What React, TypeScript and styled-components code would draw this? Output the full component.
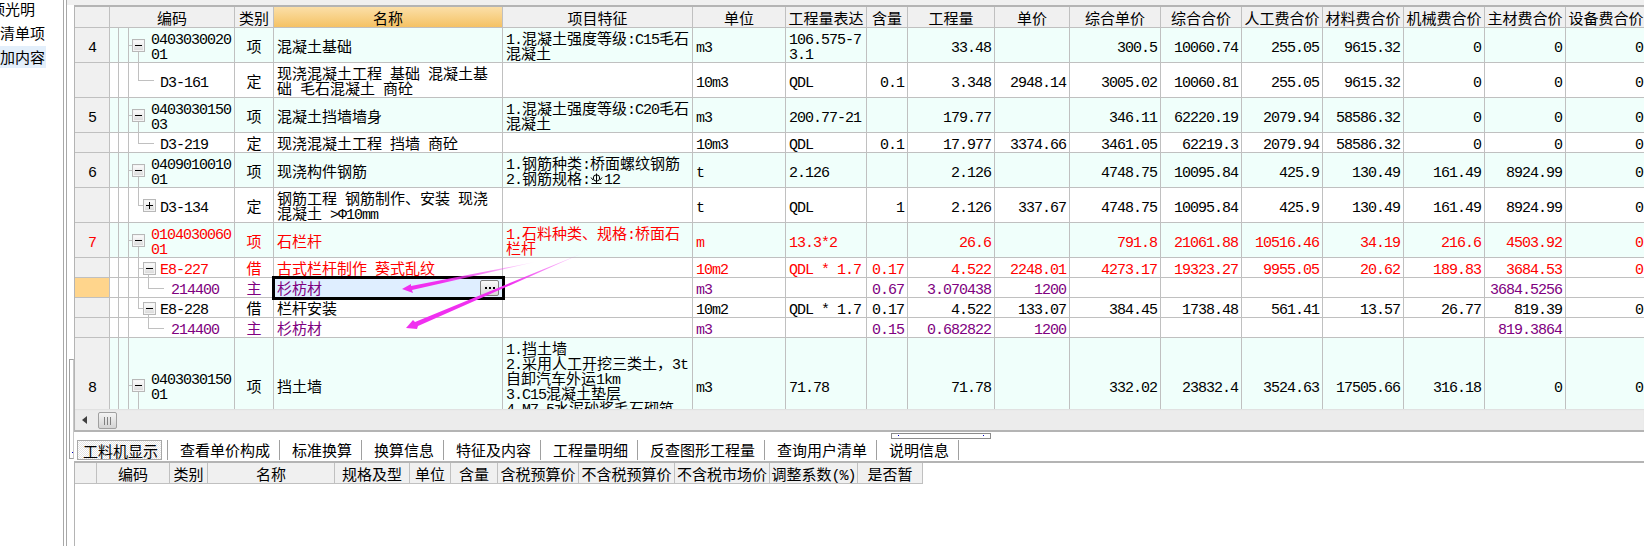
import React from 'react';
import styled, { createGlobalStyle } from 'styled-components';

const GlobalStyle = createGlobalStyle`
  html, body {
    margin: 0;
    padding: 0;
    background: #ffffff;
  }
  body {
    font-family: "Noto Sans CJK SC", "Liberation Sans", sans-serif;
    font-size: 15px;
    color: #000000;
  }
`;

const GRID_LINE = '#c0c0c0';
const FRAME_LINE = '#b4b4b4';

// Page shell
const Page = styled.div`
  position: relative;
  display: flex;
  width: 1644px;
  height: 546px;
  overflow: hidden;
`;

const Sidebar = styled.div`
  width: 63px;
  flex: none;
  display: flex;
  flex-direction: column;
  gap: 2px;
  margin-top: -2px;
  overflow: hidden;
`;

const SideItem = styled.div<{ $active?: boolean; $shift?: number }>`
  width: 46px;
  height: 22px;
  line-height: 22px;
  white-space: nowrap;
  text-indent: ${(p) => p.$shift || 0}px;
  background: ${(p) => (p.$active ? '#e3effb' : 'transparent')};
`;

const Splitter = styled.div`
  width: 2px;
  flex: none;
  border-left: 1px solid #a8a8a8;
  border-right: 1px solid #a8a8a8;
`;

const Main = styled.div`
  flex: 1;
  min-width: 0;
  display: flex;
  flex-direction: column;
`;

const TopStrip = styled.div`
  height: 5px;
  flex: none;
  background: #f0f0f0;
`;

const GridFrame = styled.div`
  height: 423px;
  flex: none;
  margin-left: 7px;
  display: flex;
  flex-direction: column;
  border: solid ${FRAME_LINE};
  border-width: 2px 0 2px 1px;
`;

const ScrollArea = styled.div`
  flex: 1;
  min-height: 0;
  overflow: hidden;
`;

// Tables
const GridTable = styled.table<{ $width: number }>`
  width: ${(p) => p.$width}px;
  table-layout: fixed;
  border-collapse: separate;
  border-spacing: 0;
  line-height: 15px;
`;

const HeadCell = styled.th<{ $current?: boolean }>`
  height: 20px;
  padding: 0;
  box-sizing: content-box;
  font-weight: 400;
  font-size: 15px;
  text-align: center;
  white-space: nowrap;
  overflow: hidden;
  background: ${(p) =>
    p.$current ? 'linear-gradient(#fbdfa8, #f5c264)' : '#f0f0f0'};
  border-right: 1px solid ${GRID_LINE};
  border-bottom: 1px solid ${GRID_LINE};
`;

const toneColor = { plain: '#000000', red: '#ff0000', purple: '#800080' };
type Tone = keyof typeof toneColor;

const Cell = styled.td<{
  $mint?: boolean;
  $tone?: Tone;
  $align?: string;
  $valign?: string;
}>`
  position: relative;
  padding: ${(p) => (p.$valign === 'top' ? '2px' : '0')} 3px 0 3px;
  overflow: hidden;
  white-space: pre;
  vertical-align: ${(p) => p.$valign || 'middle'};
  text-align: ${(p) => p.$align || 'left'};
  color: ${(p) => toneColor[p.$tone || 'plain']};
  background: ${(p) => (p.$mint ? '#f0fffb' : '#ffffff')};
  border-right: 1px solid ${GRID_LINE};
  border-bottom: 1px solid ${GRID_LINE};
`;

const RowNoCell = styled(Cell)<{ $picked?: boolean }>`
  text-align: center;
  background: ${(p) => (p.$picked ? '#ffd58c' : '#f0f0f0')};
`;

const GapCell = styled(Cell)`
  padding: 0;
`;

const SelectedCell = styled(Cell)`
  overflow: visible;
  background: #dfeeff;
  outline: 3px solid #000000;
  outline-offset: -1px;
  z-index: 1;
`;

const EllipsisButton = styled.div`
  position: absolute;
  top: 2px;
  right: 3px;
  width: 17px;
  height: 14px;
  border: 1px solid #808080;
  border-radius: 2px;
  background: linear-gradient(#fafafa, #d8d8d8);
  display: flex;
  align-items: center;
  justify-content: center;
  gap: 2px;
`;

const EllipsisDot = styled.i`
  width: 2px;
  height: 2px;
  background: #000000;
`;

const Latin = styled.span`
  font-family: "Liberation Mono", monospace;
  font-size: 15px;
  line-height: 0;
  letter-spacing: -1px;
`;

// Tree column
const TreeCell = styled(Cell)<{ $indent: number }>`
  padding-left: ${(p) => p.$indent}px;
  padding-right: 0;
`;

const VLine = styled.i<{ $x: number; $span: 'up' | 'down' | 'full' }>`
  position: absolute;
  left: ${(p) => p.$x}px;
  width: 1px;
  top: ${(p) => (p.$span === 'down' ? '50%' : '0')};
  bottom: ${(p) => (p.$span === 'up' ? '50%' : '0')};
  background: ${GRID_LINE};
`;

const HLine = styled.i<{ $x: number; $w: number }>`
  position: absolute;
  top: 50%;
  left: ${(p) => p.$x}px;
  width: ${(p) => p.$w}px;
  height: 1px;
  background: ${GRID_LINE};
`;

const Toggle = styled.span<{ $x: number }>`
  position: absolute;
  top: calc(50% - 6px);
  left: ${(p) => p.$x}px;
  width: 11px;
  height: 11px;
  border: 1px solid #b8b8b8;
  box-shadow: inset 0 0 0 1px #f4f4f4;
  background: linear-gradient(#ffffff, #d8d8d8);
  display: flex;
  align-items: center;
  justify-content: center;
`;

const ToggleBar = styled.i<{ $upright?: boolean }>`
  position: absolute;
  background: #000000;
  width: ${(p) => (p.$upright ? '1px' : '7px')};
  height: ${(p) => (p.$upright ? '7px' : '1px')};
  left: ${(p) => (p.$upright ? '5px' : '2px')};
  top: ${(p) => (p.$upright ? '2px' : '5px')};
`;

// Scrollbar
const ScrollBar = styled.div`
  height: 21px;
  flex: none;
  display: flex;
  align-items: center;
  background: #ececec;
  box-shadow: inset 0 1px 1px #e0e0e0;
`;

const ScrollLeft = styled.i`
  width: 0;
  height: 0;
  margin-left: 7px;
  border: solid transparent;
  border-width: 4px 5px 4px 0;
  border-right-color: #404040;
`;

const ScrollThumb = styled.div`
  width: 17px;
  height: 15px;
  margin: 2px 0 0 11px;
  border: 1px solid #a0a0a0;
  border-radius: 2px;
  background: linear-gradient(#f4f4f4, #d4d4d4);
  display: flex;
  align-items: center;
  justify-content: center;
  gap: 2px;
`;

const ScrollGrip = styled.i`
  width: 1px;
  height: 8px;
  background: #808080;
`;

// Tabs and lower pane
const HandleRow = styled.div`
  height: 8px;
  flex: none;
  display: flex;
  align-items: center;
`;

const HandleBar = styled.div`
  position: relative;
  width: 98px;
  height: 4px;
  margin-left: 824px;
  border: 1px solid #8c8c8c;
`;

const HandleDot = styled.i<{ $x: number }>`
  position: absolute;
  top: 1px;
  left: ${(p) => p.$x}px;
  width: 1px;
  height: 1px;
  background: #0000c0;
`;

const TabBar = styled.div`
  height: 21px;
  flex: none;
  margin-left: 10px;
  display: flex;
`;

const TabSlot = styled.div<{ $active?: boolean }>`
  height: 20px;
  flex: none;
  padding: ${(p) => (p.$active ? '0 5px 0 0' : '0 9px 0 12px')};
  border-right: 1px solid #a0a0a0;
  line-height: 20px;
  white-space: nowrap;
`;

const ActiveLabel = styled.div`
  width: 78px;
  height: 18px;
  padding-left: 5px;
  line-height: 20px;
  border: 1px solid #a8a8a8;
  background: repeating-conic-gradient(#e4e4e4 0% 25%, #ffffff 0% 50%) 0 0 / 2px 2px;
`;

const LowerPane = styled.div`
  flex: 1;
  min-height: 0;
  margin-left: 7px;
  border-top: 2px solid ${FRAME_LINE};
  border-left: 1px solid ${FRAME_LINE};
`;

// Things that lie over the page
const GutterHandle = styled.div`
  position: absolute;
  left: 69px;
  top: 359px;
  width: 3px;
  height: 98px;
  border: 1px solid #a0a0a0;
  border-right-color: #c8c8c8;
`;

const GutterDot = styled.i`
  position: absolute;
  left: 2px;
  top: 92px;
  width: 1px;
  height: 1px;
  background: #0000c0;
`;

const Annotation = styled.svg`
  position: absolute;
  left: 0;
  top: 0;
  pointer-events: none;
  z-index: 5;
`;

const RebarIcon = styled.svg`
  display: inline-block;
  vertical-align: -1px;
  margin-right: 1px;
`;

const RebarMark = () => (
  <RebarIcon width="13" height="12" viewBox="0 0 13 12" fill="none" stroke="#000" strokeWidth="1">
    <circle cx="6.5" cy="5" r="3.2" />
    <path d="M6.5 0.5V10.5M1.5 10.5H11.5M1 4.5L3 7M12 4.5L10 7" />
  </RebarIcon>
);

// split a string into latin and CJK runs, SimSun-like half width for latin
const Mixed = ({ text }: { text: string }) => {
  const parts = text.split(/([\x21-\x7e Φ]+|⌀)/).filter(Boolean);
  return (
    <>
      {parts.map((part, i) => {
        if (part === '⌀') return <RebarMark key={i} />;
        if (/^[\x21-\x7e Φ]+$/.test(part)) return <Latin key={i}>{part}</Latin>;
        return <React.Fragment key={i}>{part}</React.Fragment>;
      })}
    </>
  );
};

interface TreeSpec {
  level: 0 | 1 | 2;
  toggle?: '+' | '-';
  trunk?: 'up' | 'down' | 'full';
  branch?: 'up' | 'down';
}

interface RowData {
  no?: string;
  picked?: boolean;
  height: number;
  mint?: boolean;
  tone?: Tone;
  tree: TreeSpec;
  code: string;
  kind: string;
  name: string;
  selected?: boolean;
  feature?: string;
  featureTop?: boolean;
  unit: string;
  expr?: string;
  values: string[];
}

const upperColumns = [35, 9, 10, 106, 39, 229, 190, 93, 81, 41, 87, 75, 91, 81, 81, 81, 81, 81, 81];
const lowerColumns = [22, 73, 38, 127, 75, 41, 47, 81, 96, 95, 88, 65];
const upperHeads = ['单位', '工程量表达', '含量', '工程量', '单价', '综合单价', '综合合价', '人工费合价', '材料费合价', '机械费合价', '主材费合价', '设备费合价'];
const lowerHeads = ['', '编码', '类别', '名称', '规格及型', '单位', '含量', '含税预算价', '不含税预算价', '不含税市场价', '调整系数(%)', '是否暂'];

const rows: RowData[] = [
  {
    no: '4', height: 34, mint: true, tree: { level: 0, toggle: '-', trunk: 'down' },
    code: '0403030020\n01', kind: '项', name: '混凝土基础',
    feature: '1.混凝土强度等级:C15毛石\n混凝土', unit: 'm3', expr: '106.575-7\n3.1',
    values: ['', '33.48', '', '300.5', '10060.74', '255.05', '9615.32', '0', '0', '0'],
  },
  {
    height: 34, tree: { level: 1, trunk: 'up' },
    code: 'D3-161', kind: '定', name: '现浇混凝土工程 基础 混凝土基\n础 毛石混凝土 商砼',
    unit: '10m3', expr: 'QDL',
    values: ['0.1', '3.348', '2948.14', '3005.02', '10060.81', '255.05', '9615.32', '0', '0', '0'],
  },
  {
    no: '5', height: 34, mint: true, tree: { level: 0, toggle: '-', trunk: 'down' },
    code: '0403030150\n03', kind: '项', name: '混凝土挡墙墙身',
    feature: '1.混凝土强度等级:C20毛石\n混凝土', unit: 'm3', expr: '200.77-21',
    values: ['', '179.77', '', '346.11', '62220.19', '2079.94', '58586.32', '0', '0', '0'],
  },
  {
    height: 19, tree: { level: 1, trunk: 'up' },
    code: 'D3-219', kind: '定', name: '现浇混凝土工程 挡墙 商砼',
    unit: '10m3', expr: 'QDL',
    values: ['0.1', '17.977', '3374.66', '3461.05', '62219.3', '2079.94', '58586.32', '0', '0', '0'],
  },
  {
    no: '6', height: 34, mint: true, tree: { level: 0, toggle: '-', trunk: 'down' },
    code: '0409010010\n01', kind: '项', name: '现浇构件钢筋',
    feature: '1.钢筋种类:桥面螺纹钢筋\n2.钢筋规格:⌀12', unit: 't', expr: '2.126',
    values: ['', '2.126', '', '4748.75', '10095.84', '425.9', '130.49', '161.49', '8924.99', '0'],
  },
  {
    height: 34, tree: { level: 1, toggle: '+', trunk: 'up' },
    code: 'D3-134', kind: '定', name: '钢筋工程 钢筋制作、安装 现浇\n混凝土 >Φ10mm',
    unit: 't', expr: 'QDL',
    values: ['1', '2.126', '337.67', '4748.75', '10095.84', '425.9', '130.49', '161.49', '8924.99', '0'],
  },
  {
    no: '7', height: 34, mint: true, tone: 'red', tree: { level: 0, toggle: '-', trunk: 'down' },
    code: '0104030060\n01', kind: '项', name: '石栏杆',
    feature: '1.石料种类、规格:桥面石\n栏杆', unit: 'm', expr: '13.3*2',
    values: ['', '26.6', '', '791.8', '21061.88', '10516.46', '34.19', '216.6', '4503.92', '0'],
  },
  {
    height: 19, tone: 'red', tree: { level: 1, toggle: '-', trunk: 'full', branch: 'down' },
    code: 'E8-227', kind: '借', name: '古式栏杆制作 葵式乱纹',
    unit: '10m2', expr: 'QDL * 1.7',
    values: ['0.17', '4.522', '2248.01', '4273.17', '19323.27', '9955.05', '20.62', '189.83', '3684.53', '0'],
  },
  {
    picked: true, selected: true, height: 19, tone: 'purple', tree: { level: 2, trunk: 'full', branch: 'up' },
    code: '214400', kind: '主', name: '杉枋材',
    unit: 'm3',
    values: ['0.67', '3.070438', '1200', '', '', '', '', '', '3684.5256', ''],
  },
  {
    height: 19, tree: { level: 1, toggle: '-', trunk: 'up', branch: 'down' },
    code: 'E8-228', kind: '借', name: '栏杆安装',
    unit: '10m2', expr: 'QDL * 1.7',
    values: ['0.17', '4.522', '133.07', '384.45', '1738.48', '561.41', '13.57', '26.77', '819.39', '0'],
  },
  {
    height: 19, tone: 'purple', tree: { level: 2, branch: 'up' },
    code: '214400', kind: '主', name: '杉枋材',
    unit: 'm3',
    values: ['0.15', '0.682822', '1200', '', '', '', '', '', '819.3864', ''],
  },
  {
    no: '8', height: 94, mint: true, tree: { level: 0, toggle: '-', trunk: 'down' },
    code: '0403030150\n01', kind: '项', name: '挡土墙',
    feature: '1.挡土墙\n2.采用人工开挖三类土，3t\n自卸汽车外运1km\n3.C15混凝土垫层\n4.M7.5水泥砂浆毛石砌筑',
    featureTop: true, unit: 'm3', expr: '71.78',
    values: ['', '71.78', '', '332.02', '23832.4', '3524.63', '17505.66', '316.18', '0', '0'],
  },
];

const indentByLevel = [22, 31, 42];

const TreeGuides = ({ tree }: { tree: TreeSpec }) => (
  <>
    {tree.trunk && <VLine $x={9} $span={tree.trunk} />}
    {tree.branch && <VLine $x={19} $span={tree.branch} />}
    {tree.level === 0 && <HLine $x={0} $w={3} />}
    {tree.level === 1 && <HLine $x={9} $w={tree.toggle ? 5 : 16} />}
    {tree.level === 2 && <HLine $x={19} $w={16} />}
    {tree.toggle && (
      <Toggle $x={tree.level === 0 ? 3 : 14}>
        <ToggleBar />
        {tree.toggle === '+' && <ToggleBar $upright />}
      </Toggle>
    )}
  </>
);

const GridRow = ({ row }: { row: RowData }) => {
  const { mint, tone } = row;
  const NameCell = row.selected ? SelectedCell : Cell;
  return (
    <tr style={{ height: row.height + 1 }}>
      <RowNoCell $tone={tone} $picked={row.picked}>
        {row.no && <Mixed text={row.no} />}
      </RowNoCell>
      <GapCell $mint={mint} />
      <GapCell $mint={mint} />
      <TreeCell $mint={mint} $tone={tone} $indent={indentByLevel[row.tree.level]}>
        <TreeGuides tree={row.tree} />
        <Mixed text={row.code} />
      </TreeCell>
      <Cell $mint={mint} $tone={tone} $align="center">{row.kind}</Cell>
      <NameCell $mint={mint} $tone={tone}>
        <Mixed text={row.name} />
        {row.selected && (
          <EllipsisButton>
            <EllipsisDot />
            <EllipsisDot />
            <EllipsisDot />
          </EllipsisButton>
        )}
      </NameCell>
      <Cell $mint={mint} $tone={tone} $valign={row.featureTop ? 'top' : undefined}>
        <Mixed text={row.feature || ''} />
      </Cell>
      <Cell $mint={mint} $tone={tone}><Mixed text={row.unit} /></Cell>
      <Cell $mint={mint} $tone={tone}><Mixed text={row.expr || ''} /></Cell>
      {row.values.map((value, i) => (
        <Cell key={i} $mint={mint} $tone={tone} $align="right"><Mixed text={value} /></Cell>
      ))}
    </tr>
  );
};

const tabs = ['查看单价构成', '标准换算', '换算信息', '特征及内容', '工程量明细', '反查图形工程量', '查询用户清单', '说明信息'];

const sum = (list: number[]) => list.reduce((a, b) => a + b, 0);

const App: React.FC = () => (
  <Page>
    <GlobalStyle />
    <Sidebar>
      <SideItem $shift={-10}>顶光明</SideItem>
      <SideItem>清单项</SideItem>
      <SideItem $active>加内容</SideItem>
    </Sidebar>
    <Splitter />
    <Main>
      <TopStrip />
      <GridFrame>
        <ScrollArea>
          <GridTable $width={sum(upperColumns)}>
            <colgroup>
              {upperColumns.map((w, i) => <col key={i} width={w} />)}
            </colgroup>
            <thead>
              <tr>
                <HeadCell />
                <HeadCell colSpan={3}>编码</HeadCell>
                <HeadCell>类别</HeadCell>
                <HeadCell $current>名称</HeadCell>
                <HeadCell>项目特征</HeadCell>
                {upperHeads.map((head) => <HeadCell key={head}>{head}</HeadCell>)}
              </tr>
            </thead>
            <tbody>
              {rows.map((row, i) => <GridRow key={i} row={row} />)}
            </tbody>
          </GridTable>
        </ScrollArea>
        <ScrollBar>
          <ScrollLeft />
          <ScrollThumb>
            <ScrollGrip />
            <ScrollGrip />
            <ScrollGrip />
          </ScrollThumb>
        </ScrollBar>
      </GridFrame>
      <HandleRow>
        <HandleBar>
          <HandleDot $x={6} />
          <HandleDot $x={91} />
        </HandleBar>
      </HandleRow>
      <TabBar>
        <TabSlot $active><ActiveLabel>工料机显示</ActiveLabel></TabSlot>
        {tabs.map((tab) => <TabSlot key={tab}>{tab}</TabSlot>)}
      </TabBar>
      <LowerPane>
        <GridTable $width={sum(lowerColumns)}>
          <colgroup>
            {lowerColumns.map((w, i) => <col key={i} width={w} />)}
          </colgroup>
          <thead>
            <tr>
              {lowerHeads.map((head, i) => <HeadCell key={i}><Mixed text={head} /></HeadCell>)}
            </tr>
          </thead>
        </GridTable>
      </LowerPane>
    </Main>
    <GutterHandle><GutterDot /></GutterHandle>
    <Annotation width="1644" height="546" viewBox="0 0 1644 546">
      <defs>
        <linearGradient id="fadeUpper" gradientUnits="userSpaceOnUse" x1="535" y1="262" x2="440" y2="280">
          <stop offset="0" stopColor="#f030f0" stopOpacity="0.1" />
          <stop offset="1" stopColor="#f030f0" />
        </linearGradient>
        <linearGradient id="fadeLower" gradientUnits="userSpaceOnUse" x1="583" y1="253" x2="510" y2="284">
          <stop offset="0" stopColor="#f030f0" stopOpacity="0.1" />
          <stop offset="1" stopColor="#f030f0" />
        </linearGradient>
      </defs>
      <path d="M402 289L411 284L411 286L535 262L412 290L413 293Z" fill="url(#fadeUpper)" />
      <path d="M406 328L413 320L415 322L583 253L418 326L417 329Z" fill="url(#fadeLower)" />
    </Annotation>
  </Page>
);

export default App;
